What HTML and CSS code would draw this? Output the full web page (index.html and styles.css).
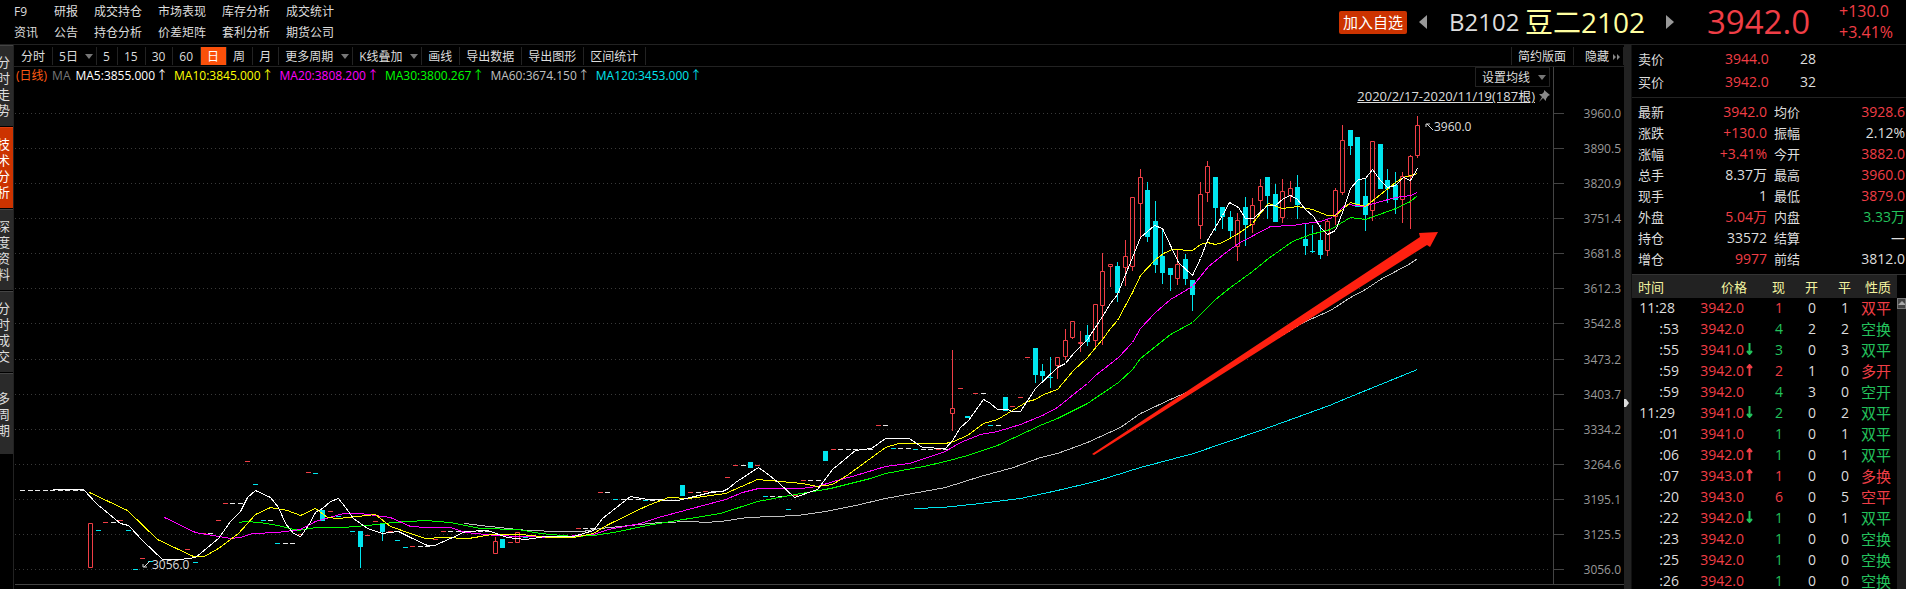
FILE: index.html
```
<!DOCTYPE html>
<html lang="zh-CN">
<head>
    <meta charset="UTF-8">
    <meta name="viewport" content="width=device-width, initial-scale=1.0">
    <title>豆二2102 日线</title>
    <link rel="stylesheet" href="styles.css">
</head>
<body>
    <header class="topbar">
        <nav class="menu">
            <a href="#">F9</a><a href="#">研报</a><a href="#">成交持仓</a><a href="#">市场表现</a><a href="#">库存分析</a><a href="#">成交统计</a>
            <a href="#">资讯</a><a href="#">公告</a><a href="#">持仓分析</a><a href="#">价差矩阵</a><a href="#">套利分析</a><a href="#">期货公司</a>
        </nav>
        <div class="contract">
            <button class="btn-add">加入自选</button>
            <button class="btn-step" aria-label="上一个"><svg width="8" height="14"><path d="M8 0v14L0 7z" fill="#999"/></svg></button>
            <span class="code">B2102</span>
            <h1 class="name">豆二2102</h1>
            <button class="btn-step next" aria-label="下一个"><svg width="8" height="14"><path d="M0 0v14l8-7z" fill="#999"/></svg></button>
            <span class="last">3942.0</span>
            <div class="change"><span>+130.0</span><span>+3.41%</span></div>
        </div>
    </header>

    <div class="main">
        <!-- Side tabs -->
        <nav class="side-tabs">
            <button><span>分时走势</span></button>
            <button class="active"><span>技术分析</span></button>
            <button><span>深度资料</span></button>
            <button><span>分时成交</span></button>
            <button><span>多周期</span></button>
        </nav>

        <!-- Chart -->
        <section class="chart">
            <div class="toolbar">
                <button>分时</button>
                <label class="drop"><select aria-label="多日分时"><option>5日</option></select><i class="caret"></i></label>
                <button>5</button>
                <button>15</button>
                <button>30</button>
                <button>60</button>
                <button class="active">日</button>
                <button>周</button>
                <button>月</button>
                <label class="drop"><select aria-label="周期"><option>更多周期</option></select><i class="caret"></i></label>
                <label class="drop"><select aria-label="叠加"><option>K线叠加</option></select><i class="caret"></i></label>
                <button>画线</button>
                <button>导出数据</button>
                <button>导出图形</button>
                <button>区间统计</button>
                <button class="push">简约版面</button>
                <button class="hide">隐藏 <svg width="8" height="6"><path d="M0 0l3 3-3 3zM4 0l3 3-3 3z" fill="#888"/></svg></button>
            </div>
            <div class="plot">
                <svg id="kline" viewBox="14 67 1610 522" preserveAspectRatio="xMinYMin meet"></svg>
                <div class="legend">
                    <span class="period">(日线)</span>
                    <span class="ma">MA</span>
                    <span class="ma5">MA5:3855.000<b>↑</b></span>
                    <span class="ma10">MA10:3845.000<b>↑</b></span>
                    <span class="ma20">MA20:3808.200<b>↑</b></span>
                    <span class="ma30">MA30:3800.267<b>↑</b></span>
                    <span class="ma60">MA60:3674.150<b>↑</b></span>
                    <span class="ma120">MA120:3453.000<b>↑</b></span>
                </div>
                <div class="plot-tools">
                    <label class="drop"><select aria-label="均线"><option>设置均线</option></select><i class="caret"></i></label>
                    <div class="range">
                        <a href="#">2020/2/17-2020/11/19(187根)</a>
                        <svg width="12" height="12"><path d="M6 0l6 5-2 1-2 3 0 2-3-3-4 4 3-5-3-3 3 0 2-2z" fill="#888"/></svg>
                    </div>
                </div>
            </div>
        </section>

        <button class="splitter" aria-label="收起"><svg width="5" height="8"><path d="M0 0h2l3 4-3 4H0z" fill="#ddd"/></svg></button>

        <!-- Quote panel -->
        <aside class="quote">
            <table class="bidask">
                <tr><th>卖价</th><td class="up">3944.0</td><td>28</td></tr>
                <tr><th>买价</th><td class="up">3942.0</td><td>32</td></tr>
            </table>
            <table class="stats">
                <tr><th>最新</th><td class="up">3942.0</td><th>均价</th><td class="up">3928.6</td></tr>
                <tr><th>涨跌</th><td class="up">+130.0</td><th>振幅</th><td>2.12%</td></tr>
                <tr><th>涨幅</th><td class="up">+3.41%</td><th>今开</th><td class="up">3882.0</td></tr>
                <tr><th>总手</th><td>8.37万</td><th>最高</th><td class="up">3960.0</td></tr>
                <tr><th>现手</th><td>1</td><th>最低</th><td class="up">3879.0</td></tr>
                <tr><th>外盘</th><td class="up">5.04万</td><th>内盘</th><td class="down">3.33万</td></tr>
                <tr><th>持仓</th><td>33572</td><th>结算</th><td>—</td></tr>
                <tr><th>增仓</th><td class="up">9977</td><th>前结</th><td>3812.0</td></tr>
            </table>
            <div class="ticks">
                <table>
                    <thead>
                        <tr><th>时间</th><th>价格</th><th>现</th><th>开</th><th>平</th><th>性质</th></tr>
                    </thead>
                    <tbody id="tickRows"></tbody>
                </table>
                <div class="scroll"><i><svg width="8" height="5"><path d="M4 0l4 4H0z" fill="#aaa"/></svg></i></div>
            </div>
        </aside>
    </div>
    <script src="chart.js"></script>
</body>
</html>
```
FILE: styles.css
```
* {
    box-sizing: border-box;
    margin: 0;
    padding: 0;
}

body {
    background: #000;
    color: #ddd;
    font-family: "Open Sans", "Noto Sans CJK SC", sans-serif;
    font-size: 12px;
    height: 100vh;
    display: flex;
    flex-direction: column;
    overflow: hidden;
}

a {
    color: inherit;
    text-decoration: none;
}

button, select {
    font: inherit;
    color: inherit;
    background: none;
    border: none;
    appearance: none;
    cursor: pointer;
    white-space: nowrap;
}

svg {
    display: block;
}

.up {
    color: #f03e46;
}

.down {
    color: #23c25c;
}

/* Top bar */
.topbar {
    display: flex;
    justify-content: space-between;
    height: 45px;
    border-bottom: 1px solid #222;
}

.menu {
    display: grid;
    grid-template-columns: 40px 40px repeat(4, 64px);
    grid-auto-rows: 21px;
    padding: 1px 0 0 14px;
    line-height: 21px;
}

.contract {
    display: flex;
    align-items: center;
    white-space: nowrap;
}

.btn-add {
    width: 68px;
    height: 23px;
    margin-right: 12px;
    background: #cc3300;
    border-radius: 2px;
    color: #fff;
    font-size: 15px;
    line-height: 23px;
}

.btn-step.next {
    margin-right: 33px;
}

.code {
    width: 76px;
    margin-left: 22px;
    font-size: 24px;
    line-height: 42px;
}

.name {
    width: 141px;
    color: #ffffa0;
    font-size: 28px;
    font-weight: normal;
    line-height: 42px;
}

.last {
    width: 132px;
    color: #f03e46;
    font-size: 33px;
    line-height: 42px;
}

.change {
    width: 67px;
    display: flex;
    flex-direction: column;
    color: #f03e46;
    font-size: 16px;
    line-height: 21px;
}

/* Main area */
.main {
    flex: 1;
    min-height: 0;
    display: grid;
    grid-template-columns: 14px 1fr 8px 274px;
}

.side-tabs {
    overflow: hidden;
    border-right: 1px solid #222;
}

.side-tabs button {
    display: flex;
    align-items: center;
    width: 13px;
    height: 82px;
    background: #2a2a2a;
    border-top: 1px solid #444;
    border-bottom: 1px solid #000;
    font-size: 13px;
    line-height: 16px;
    white-space: normal;
    word-break: break-all;
}

.side-tabs span {
    flex: none;
    width: 13px;
    margin-left: -3px;
}

.side-tabs .active {
    background: #cc3300;
    border-top-color: #e04010;
    color: #fff;
}

.chart {
    display: flex;
    flex-direction: column;
    min-width: 0;
}

.toolbar {
    display: flex;
    height: 22px;
    padding: 2px 0 1px 1px;
    border-bottom: 1px solid #222;
}

.toolbar button {
    padding: 1px 7px 0 6px;
    border-right: 1px solid #222;
    line-height: 18px;
}

.toolbar .active {
    background: #fa500a;
    color: #fff;
}

.toolbar .push {
    margin-left: auto;
    border-left: 1px solid #222;
}

.toolbar .hide {
    display: flex;
    align-items: center;
    gap: 4px;
    padding-left: 11px;
    padding-right: 2px;
}

.drop {
    display: flex;
    align-items: center;
    gap: 7px;
    padding: 1px 3px 0 6px;
    border-right: 1px solid #222;
    line-height: 18px;
}

.caret {
    border: 4px solid transparent;
    border-top: 5px solid #777;
    border-bottom: 0;
}

.plot {
    position: relative;
    flex: 1;
    min-height: 0;
}

#kline {
    width: 100%;
    height: 100%;
}

#kline text {
    font-size: 12px;
}

.legend {
    position: absolute;
    top: 0;
    left: 2px;
    display: flex;
    gap: 5px;
    line-height: 17px;
}

.legend span {
    white-space: nowrap;
}

.legend b {
    display: inline-block;
    width: 14px;
    font-weight: normal;
    text-align: center;
}

.period { color: #ff5a14; }
.ma { color: #777; }
.ma5 { color: #fff; }
.ma10 { color: #ff0; }
.ma20 { color: #f0f; }
.ma30 { color: #0f0; }
.ma60 { color: #c0c0c0; }
.ma120 { color: #00e5ee; }

.plot-tools {
    position: absolute;
    top: 0;
    right: 74px;
    display: flex;
    flex-direction: column;
    align-items: flex-end;
}

.plot-tools .drop {
    border: 1px solid #222;
    height: 20px;
}

.range {
    display: flex;
    align-items: center;
    gap: 3px;
    font-size: 13px;
    line-height: 18px;
}

.range a {
    text-decoration: underline;
}

.splitter {
    display: flex;
    align-items: center;
    padding-top: 176px;
    padding-bottom: 4px;
    background: #222;
    border-right: 1px solid #111;
}

/* Quote panel */
.quote {
    display: flex;
    flex-direction: column;
    min-height: 0;
    overflow: hidden;
    font-size: 14px;
}

.quote table {
    border-collapse: collapse;
    table-layout: fixed;
    width: 100%;
}

.quote th {
    font-size: 13px;
    font-weight: normal;
    text-align: left;
}

.bidask {
    margin-top: 2px;
}

.bidask td, .bidask th {
    height: 23px;
    padding-left: 6px;
    line-height: 20px;
}

.bidask th {
    width: 87px;
}

.bidask td:nth-child(2) {
    width: 75px;
}

.stats {
    margin-top: 4px;
    border-top: 1px solid #222;
}

.stats td, .stats th {
    height: 21px;
    padding: 0 1px 0 6px;
    line-height: 20px;
}

.stats th {
    width: 50px;
}

.stats td {
    text-align: right;
    white-space: nowrap;
}

.stats td:nth-child(2) {
    width: 86px;
}

.stats tr:first-child > * {
    height: 25px;
    padding-top: 3px;
}

.ticks {
    display: flex;
    margin-top: 4px;
    border-top: 1px solid #333;
}

.ticks table {
    flex: 1;
}

.ticks thead th {
    height: 23px;
    padding-top: 2px;
    background: #222;
    color: #f4f4a0;
    line-height: 20px;
    text-align: right;
}

.ticks thead th:first-child {
    padding-left: 6px;
    text-align: left;
}

.ticks th:nth-child(1) { width: 49px; }
.ticks th:nth-child(2) { width: 66px; }
.ticks th:nth-child(3) { width: 38px; }
.ticks th:nth-child(4) { width: 33px; }
.ticks th:nth-child(5) { width: 33px; }

.ticks thead th:last-child {
    padding-right: 6px;
}

.ticks td {
    height: 21px;
    line-height: 20px;
    text-align: right;
    padding-right: 2px;
    white-space: nowrap;
}

.ticks td:nth-child(2) {
    padding-right: 3px;
}

.ticks td.minute {
    padding-right: 6px;
}

.ticks td:last-child {
    padding-right: 6px;
    font-size: 15px;
}

.ticks td svg {
    display: inline-block;
    margin-right: -9px;
    margin-left: 2px;
}

.scroll {
    width: 9px;
    margin-top: 23px;
    background: #1c1c1c;
}

.scroll i {
    display: flex;
    align-items: center;
    height: 11px;
    background: #444;
    border: 1px solid #777;
}
```
FILE: chart.js
```
const RED = '#f03e46';
const CYAN = '#00e5ee';
const WHITE = '#e8e8e8';
const svg = document.getElementById('kline');
let out = '';

// horizontal grid with price scale
const prices = ['3960.0', '3890.5', '3820.9', '3751.4', '3681.8', '3612.3', '3542.8', '3473.2', '3403.7', '3334.2', '3264.6', '3195.1', '3125.5', '3056.0'];
prices.forEach((p, i) => {
    const y = Math.round(113 + i * 35.08) + 0.5;
    out += `<path d="M15 ${y}H1549" stroke="#3a3a3a" stroke-dasharray="1 3"/>`;
    out += `<path d="M1553 ${y}h11" stroke="#444"/>`;
    out += `<text x="1621" y="${y + 4.5}" text-anchor="end" fill="#999">${p}</text>`;
});
out += '<path d="M1553.5 67V584M15 584.5H1624" stroke="#444" fill="none"/>';

// sessions without any range: colour, y, x positions
const flats = [
    [WHITE, 490, [22, 30, 37, 45, 52, 60, 67, 75, 82]],
    [CYAN, 530, [98, 128]], [RED, 522, [105]], [WHITE, 522, [113]], [RED, 520, [120, 218]],
    [CYAN, 569, [135]], [RED, 558, [142]], [CYAN, 561, [150]], [RED, 559, [165]], [RED, 549, [187]],
    [CYAN, 562, [195]], [RED, 533, [203]], [WHITE, 533, [210]], [RED, 503, [225]], [WHITE, 503, [232, 240]],
    [RED, 461, [247]], [CYAN, 484, [255]], [CYAN, 520, [263]], [WHITE, 520, [270]], [CYAN, 543, [277]],
    [WHITE, 543, [285, 292]], [RED, 534, [300]], [RED, 472, [308]], [CYAN, 473, [315]], [RED, 511, [330]],
    [CYAN, 516, [338]], [CYAN, 531, [352]], [RED, 535, [367]], [RED, 521, [375]], [RED, 531, [390]],
    [CYAN, 540, [397]], [CYAN, 547, [405]], [RED, 546, [412]], [WHITE, 546, [420, 427]], [RED, 539, [435]],
    [RED, 531, [443]], [WHITE, 531, [450, 458, 465, 472, 480, 487]], [RED, 542, [510]], [CYAN, 537, [525]],
    [WHITE, 538, [532]], [RED, 528, [578]], [WHITE, 528, [585, 592]], [RED, 492, [600, 690]], [WHITE, 492, [607, 698]],
    [CYAN, 499, [615]], [WHITE, 499, [623, 630, 638]], [CYAN, 500, [645]], [WHITE, 500, [652, 660, 667, 675]],
    [RED, 491, [705]], [WHITE, 491, [713, 720]], [RED, 477, [727]], [RED, 465, [735, 757]], [WHITE, 465, [743]],
    [CYAN, 496, [765]], [WHITE, 496, [772, 780]], [CYAN, 509, [788]], [RED, 495, [795]], [RED, 480, [803]],
    [WHITE, 480, [810, 818]], [RED, 449, [833, 938]], [WHITE, 449, [840, 848, 855, 863, 870, 923, 930, 945]],
    [RED, 425, [878]], [WHITE, 425, [885, 998]], [CYAN, 448, [893]], [WHITE, 448, [900, 908]], [CYAN, 449, [915]],
    [RED, 388, [960]], [RED, 393, [975]], [WHITE, 393, [983]], [CYAN, 425, [990]], [RED, 406, [1012]],
    [RED, 397, [1020]], [RED, 357, [1027]]
];
flats.forEach(([color, y, xs]) => {
    xs.forEach(x => out += `<path d="M${x - 2} ${y + 0.5}h5" stroke="${color}"/>`);
});

// x, high, body top, body bottom, low, direction (1 = up)
const candles = [
    [90, 523, 523, 567, 567, 1], [322, 510, 510, 521, 521, 0], [360, 531, 531, 547, 568, 0], [382, 524, 524, 532, 541, 0],
    [495, 537, 541, 553, 553, 1], [502, 539, 539, 548, 548, 0], [517, 532, 532, 542, 542, 1], [682, 485, 485, 496, 496, 0],
    [750, 462, 462, 468, 468, 0], [825, 451, 451, 461, 461, 0], [952, 350, 408, 413, 431, 1], [967, 416, 416, 418, 418, 0],
    [1005, 397, 397, 411, 411, 0], [1035, 348, 348, 375, 383, 0], [1042, 364, 371, 376, 382, 0], [1050, 357, 377, 378, 388, 0],
    [1057, 357, 357, 365, 379, 1], [1065, 329, 340, 356, 360, 1], [1072, 321, 321, 337, 339, 1], [1080, 331, 342, 343, 352, 1],
    [1087, 325, 335, 342, 346, 0], [1095, 304, 304, 340, 349, 1], [1102, 253, 271, 305, 345, 1], [1110, 264, 264, 266, 287, 1],
    [1117, 262, 266, 293, 302, 0], [1125, 240, 256, 267, 286, 1], [1132, 197, 197, 266, 271, 1], [1140, 169, 177, 203, 237, 1],
    [1147, 182, 190, 237, 242, 0], [1155, 201, 221, 265, 273, 0], [1162, 229, 256, 273, 284, 0], [1170, 268, 268, 275, 291, 0],
    [1177, 250, 264, 278, 285, 1], [1185, 254, 259, 279, 285, 0], [1192, 280, 280, 295, 311, 0], [1200, 182, 194, 225, 239, 1],
    [1207, 161, 166, 192, 202, 1], [1215, 177, 177, 208, 231, 0], [1222, 207, 207, 217, 229, 0], [1230, 211, 217, 231, 238, 0],
    [1237, 213, 220, 246, 261, 1], [1245, 197, 207, 225, 246, 0], [1252, 198, 205, 224, 233, 1], [1260, 179, 186, 200, 212, 1],
    [1267, 177, 177, 196, 219, 0], [1275, 184, 194, 222, 222, 0], [1282, 179, 191, 217, 223, 1], [1290, 181, 188, 195, 202, 1],
    [1297, 175, 187, 205, 219, 0], [1305, 223, 239, 246, 255, 0], [1312, 225, 251, 252, 253, 0], [1320, 225, 240, 255, 259, 0],
    [1327, 220, 221, 250, 256, 1], [1335, 188, 190, 216, 225, 1], [1342, 125, 140, 192, 195, 1], [1350, 130, 130, 146, 155, 0],
    [1357, 137, 137, 207, 207, 0], [1365, 179, 196, 215, 231, 0], [1372, 141, 141, 210, 221, 1], [1380, 144, 144, 189, 189, 0],
    [1387, 169, 180, 189, 203, 0], [1395, 172, 185, 200, 214, 0], [1402, 172, 176, 199, 223, 1], [1410, 155, 156, 176, 229, 1],
    [1417, 116, 125, 155, 158, 1]
];
candles.forEach(([x, high, top, bottom, low, up]) => {
    const c = x + 0.5;
    if (up) {
        out += `<path d="M${c} ${high}V${top}M${c} ${bottom}V${low}M${c - 2} ${top + 0.5}h4V${bottom + 0.5}h-4z" stroke="${RED}" fill="none"/>`;
    } else {
        out += `<path d="M${c} ${high}V${low}" stroke="${CYAN}"/>`;
        out += `<rect x="${x - 2}" y="${top}" width="5" height="${bottom - top}" fill="${CYAN}"/>`;
    }
});

// moving averages
const lines = {
    '#00e5ee': '914,508 942,507 980,503 1020,498 1057,490 1095,481 1140,467 1193,453 1260,430 1329,405 1348,397 1417,369',
    '#c0c0c0': '464,523 480,525 527,530 560,531 582,531 600,528 630,525 660,522 693,521 703,522 720,521 747,517 797,515 825,511 855,505 885,498 923,491 945,487 980,476 1013,467 1040,457 1057,453 1087,442 1120,427 1140,413 1172,398 1193,389 1250,354 1303,322 1330,310 1350,297 1365,289 1380,279 1395,271 1410,263 1417,258',
    '#00ff00': '239,522 245,521 260,522 277,525 298,530 315,527 343,527 367,525 393,522 425,520 450,522 465,525 480,528 518,529 540,533 573,536 593,535 613,532 647,525 683,519 720,513 757,501 795,494 830,488 870,478 885,473 923,466 945,461 967,455 997,445 1012,438 1042,424 1057,418 1073,410 1087,403 1118,382 1132,369 1140,358 1155,346 1170,334 1192,322 1215,299 1230,287 1252,271 1268,258 1292,241 1310,234 1330,229 1350,217 1365,219 1373,216 1393,209 1410,201 1417,195',
    '#ff00ff': '164,517 195,532 230,538 240,537 252,533 277,532 300,529 315,521 343,513 360,513 390,517 410,526 427,527 450,527 465,532 495,535 550,537 593,534 608,529 640,523 658,517 725,499 742,492 758,488 800,488 817,486 833,481 855,475 885,466 909,463 945,451 960,442 980,434 997,431 1020,424 1042,415 1057,407 1073,394 1087,383 1095,375 1118,357 1132,342 1140,328 1155,312 1170,299 1192,286 1208,266 1223,254 1238,243 1253,235 1270,226 1292,225 1305,223 1320,221 1332,217 1342,207 1348,204 1363,206 1377,202 1395,197 1410,195 1417,192',
    '#ffff00': '89,492 127,510 157,539 193,556 204,556 218,548 238,533 255,514 270,507 287,510 300,515 315,508 327,517 338,518 375,514 390,526 410,533 425,538 442,537 468,538 492,534 520,534 550,537 573,537 593,533 608,524 645,506 668,497 688,498 725,493 757,479 780,481 802,483 817,486 832,484 848,474 885,447 898,443 945,443 953,441 967,435 983,423 997,419 1012,410 1027,401 1035,399 1043,394 1057,389 1073,370 1087,357 1102,339 1110,328 1117,320 1132,292 1140,275 1155,259 1163,253 1172,249 1192,250 1200,244 1207,242 1215,244 1222,242 1238,233 1252,223 1268,203 1282,208 1297,206 1312,209 1327,215 1335,215 1350,202 1365,206 1380,194 1395,182 1403,177 1417,173',
    '#ffffff': '52,489 83,489 97,504 120,523 128,525 143,541 162,559 180,559 195,557 218,538 230,521 240,511 247,497 255,490 270,497 278,507 285,523 293,533 300,536 308,525 315,512 322,508 330,501 338,498 345,507 353,518 367,528 382,533 398,531 410,537 427,545 434,545 450,538 465,531 487,530 507,537 525,539 533,538 545,536 573,536 593,530 602,518 630,496 647,499 677,500 690,497 710,492 722,491 728,488 735,482 758,467 765,472 778,482 794,497 817,489 832,469 855,450 871,448 885,438 909,438 922,447 945,448 952,440 960,427 968,420 983,399 990,403 997,409 1007,409 1012,411 1020,411 1035,388 1057,367 1065,363 1073,353 1087,339 1102,316 1110,303 1117,294 1132,257 1140,237 1154,225 1162,228 1178,262 1192,275 1200,258 1207,240 1222,215 1229,202 1238,207 1245,218 1253,218 1267,205 1275,205 1283,198 1290,195 1297,199 1305,209 1313,216 1320,227 1327,234 1335,230 1342,212 1350,188 1358,179 1365,178 1372,169 1380,180 1387,187 1395,185 1403,177 1410,180 1417,168'
};
for (const color in lines) {
    out += `<g transform="translate(0.5 0.5)"><polyline points="${lines[color]}" fill="none" stroke="${color}" shape-rendering="crispEdges"/></g>`;
}

// extremes
out += '<path d="M1427 124l6 6M1426 127v-3h4" stroke="#ddd" fill="none"/><text x="1434" y="131" fill="#ddd">3960.0</text>';
out += '<path d="M150 561l-6 6M143 564v3h4" stroke="#ddd" fill="none"/><text x="152" y="569" fill="#ddd">3056.0</text>';

// trend arrow
out += '<polygon points="1092,454 1420,237 1419,233 1438,232 1430,247 1427,245 1094,455" fill="#ff2010"/>';
svg.innerHTML = out;

// trade ticks: time, price, arrow, volume, open, close, kind, direction
const ticks = [
    ['11:28', '3942.0', '', 1, 0, 1, '双平', 'up'],
    [':53', '3942.0', '', 4, 2, 2, '空换', 'down'],
    [':55', '3941.0', 'down', 3, 0, 3, '双平', 'down'],
    [':59', '3942.0', 'up', 2, 1, 0, '多开', 'up'],
    [':59', '3942.0', '', 4, 3, 0, '空开', 'down'],
    ['11:29', '3941.0', 'down', 2, 0, 2, '双平', 'down'],
    [':01', '3941.0', '', 1, 0, 1, '双平', 'down'],
    [':06', '3942.0', 'up', 1, 0, 1, '双平', 'down'],
    [':07', '3943.0', 'up', 1, 0, 0, '多换', 'up'],
    [':20', '3943.0', '', 6, 0, 5, '空平', 'up'],
    [':22', '3942.0', 'down', 1, 0, 1, '双平', 'down'],
    [':23', '3942.0', '', 1, 0, 0, '空换', 'down'],
    [':25', '3942.0', '', 1, 0, 0, '空换', 'down'],
    [':26', '3942.0', '', 1, 0, 0, '空换', 'down']
];
const arrows = {
    '': '',
    up: `<svg width="7" height="12"><path d="M3.5 12V2M1 4l2.5-3L6 4" stroke="${RED}" stroke-width="2" fill="none"/></svg>`,
    down: '<svg width="7" height="12"><path d="M3.5 0v10M1 8l2.5 3L6 8" stroke="#23c25c" stroke-width="2" fill="none"/></svg>'
};
document.getElementById('tickRows').innerHTML = ticks.map(t => `
    <tr>
        <td class="${t[0].length > 3 ? 'minute' : 'second'}">${t[0]}</td>
        <td class="up">${t[1]}${arrows[t[2]]}</td>
        <td class="${t[7]}">${t[3]}</td><td>${t[4]}</td><td>${t[5]}</td>
        <td class="${t[7]}">${t[6]}</td>
    </tr>`).join('');
```
